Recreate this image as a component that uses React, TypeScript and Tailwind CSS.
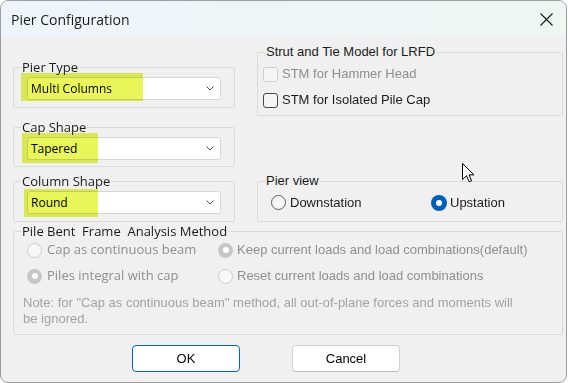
import React from "react";

const seg = "font-['Open_Sans',sans-serif]";
const ari = "font-['Liberation_Sans',Arial,sans-serif]";

type BoxProps = {
  label: string;
  font: string;
  className?: string;
  children?: React.ReactNode;
};

const GroupBox = ({ label, font, className = "", children }: BoxProps) => (
  <div className={`relative border border-[#dadada] rounded-[2px] ${className}`}>
    <span
      className={`absolute -top-[9px] left-[7px] px-[1px] bg-[#f0f0f0] leading-[16px] text-[13px] text-[#1b1b1b] whitespace-pre ${font}`}
    >
      {label}
    </span>
    {children}
  </div>
);

const Combo = ({ value }: { value: string }) => (
  <div className="flex items-center justify-between w-[194px] h-[23px] bg-white border border-[#d6d6d6] rounded-[3px] pl-[3px] pr-[6px]">
    <span className={`${seg} text-[12px] text-black leading-none`}>{value}</span>
    <svg width="8" height="5" viewBox="0 0 8 5">
      <path d="M0.5 0.5 L4 4 L7.5 0.5" fill="none" stroke="#505050" strokeWidth="1" />
    </svg>
  </div>
);

const Highlight = ({ className }: { className: string }) => (
  <div className={`absolute bg-[#e8f65a] mix-blend-multiply pointer-events-none ${className}`} />
);

const Radio = ({ checked, disabled }: { checked?: boolean; disabled?: boolean }) => {
  if (checked && !disabled)
    return (
      <span className="flex items-center justify-center w-[16px] h-[16px] rounded-full bg-[#005fb8]">
        <span className="w-[6px] h-[6px] rounded-full bg-white" />
      </span>
    );
  if (checked)
    return (
      <span className="flex items-center justify-center w-[15px] h-[15px] rounded-full bg-[#c6c6c6]">
        <span className="w-[6px] h-[6px] rounded-full bg-white" />
      </span>
    );
  return (
    <span
      className={`w-[15px] h-[15px] rounded-full border ${
        disabled ? "border-[#cbcbcb] bg-[#f8f8f8]" : "border-[#5f5f5f] bg-[#f6f6f6]"
      }`}
    />
  );
};

const Check = ({ disabled }: { disabled?: boolean }) => (
  <span
    className={`w-[15px] h-[15px] rounded-[3px] border ${
      disabled ? "border-[#cfcfcf] bg-[#f5f5f5]" : "border-[#474747] bg-[#f5f5f5]"
    }`}
  />
);

const Cursor = () => (
  <svg className="absolute left-[462px] top-[163px]" width="13" height="20" viewBox="0 0 13 20">
    <path
      d="M0.5 0.5 L0.5 16.5 L4.5 12.8 L7.2 18.8 L9.6 17.8 L7 11.9 L12 11.9 Z"
      fill="white"
      stroke="black"
      strokeWidth="1"
      strokeLinejoin="round"
    />
  </svg>
);

export default function App() {
  return (
    <div className="relative w-[568px] h-[383px] bg-white">
      <div className="w-[567px] h-[383px] rounded-[8px] border border-[#9d9d9d] overflow-hidden bg-[#f0f0f0] flex flex-col">
        {/* title bar */}
        <div className="h-[36px] shrink-0 flex items-center justify-between pl-[10px] pr-[13px] bg-gradient-to-r from-[#eef4fa] to-[#eff5f1]">
          <span className={`${seg} text-[14px] text-[#1a1a1a]`}>Pier Configuration</span>
          <svg width="13" height="13" viewBox="0 0 13 13">
            <path d="M0.5 0.5 L12.5 12.5 M12.5 0.5 L0.5 12.5" stroke="#1a1a1a" strokeWidth="1.1" />
          </svg>
        </div>

        <div className="pl-[12px] pr-[3px] flex flex-col">
          <div className="flex items-start">
            {/* left column */}
            <div className="w-[222px] shrink-0 flex flex-col">
              <GroupBox label="Pier Type" font={seg} className="mt-[30px] h-[41px] pl-[13px] pt-[9px]">
                <Combo value="Multi Columns" />
                <Highlight className="left-[7px] top-[5px] w-[122px] h-[28px]" />
              </GroupBox>
              <GroupBox label="Cap Shape" font={seg} className="mt-[19px] h-[40px] pl-[13px] pt-[9px]">
                <Combo value="Tapered" />
                <Highlight className="left-[8px] top-[5px] w-[76px] h-[30px]" />
              </GroupBox>
              <GroupBox label="Column Shape" font={seg} className="mt-[14px] h-[41px] pl-[13px] pt-[9px]">
                <Combo value="Round" />
                <Highlight className="left-[10px] top-[7px] w-[74px] h-[28px]" />
              </GroupBox>
            </div>

            {/* right column */}
            <div className="ml-[22px] flex-1 flex flex-col">
              <GroupBox
                label="Strut and Tie Model for LRFD"
                font={ari}
                className="mt-[15px] h-[64px] pl-[5px] pt-[8px]"
              >
                <div className="h-[26px] flex items-center gap-[4px]">
                  <Check disabled />
                  <span className={`${ari} text-[13px] text-[#8d8d8d]`}>STM for Hammer Head</span>
                </div>
                <div className="h-[26px] flex items-center gap-[4px]">
                  <Check />
                  <span className={`${ari} text-[13px] text-[#1b1b1b]`}>STM for Isolated Pile Cap</span>
                </div>
              </GroupBox>
              <GroupBox label="Pier view" font={ari} className="mt-[65px] h-[41px] pl-[13px] pt-[11px]">
                <div className="flex items-center">
                  <div className="w-[160px] flex items-center gap-[4px]">
                    <Radio />
                    <span className={`${ari} text-[13px] text-[#1b1b1b]`}>Downstation</span>
                  </div>
                  <div className="flex items-center gap-[3px]">
                    <Radio checked />
                    <span className={`${ari} text-[13px] text-[#1b1b1b]`}>Upstation</span>
                  </div>
                </div>
              </GroupBox>
            </div>
          </div>

          <GroupBox
            label="Pile Bent  Frame  Analysis Method"
            font={seg}
            className="mt-[9px] h-[104px] pl-[13px] pt-[5px]"
          >
            <div className="h-[26px] flex items-center">
              <div className="w-[191px] flex items-center gap-[5px]">
                <Radio disabled />
                <span className={`${seg} text-[13px] text-[#8f8f8f]`}>Cap as continuous beam</span>
              </div>
              <div className="flex items-center gap-[4px]">
                <Radio checked disabled />
                <span className={`${ari} text-[13px] text-[#8f8f8f]`}>
                  Keep current loads and load combinations(default)
                </span>
              </div>
            </div>
            <div className="h-[26px] flex items-center">
              <div className="w-[191px] flex items-center gap-[5px]">
                <Radio checked disabled />
                <span className={`${seg} text-[13px] text-[#8f8f8f]`}>Piles integral with cap</span>
              </div>
              <div className="flex items-center gap-[4px]">
                <Radio disabled />
                <span className={`${ari} text-[13px] text-[#8f8f8f]`}>
                  Reset current loads and load combinations
                </span>
              </div>
            </div>
            <p className={`${ari} mt-[6px] -ml-[4px] text-[13px] leading-[16px] text-[#a3a3a3] w-[502px]`}>
              Note: for "Cap as continuous beam" method, all out-of-plane forces and moments will
              be ignored.
            </p>
          </GroupBox>

          <div className="mt-[10px] ml-[119px] flex gap-[52px]">
            <button
              className={`${ari} w-[108px] h-[27px] rounded-[4px] bg-white border border-[#0067c0] text-[13px] text-black`}
            >
              OK
            </button>
            <button
              className={`${ari} w-[108px] h-[27px] rounded-[4px] bg-white border border-[#d2d2d2] border-b-[#bcbcbc] text-[13px] text-black`}
            >
              Cancel
            </button>
          </div>
        </div>
      </div>
      <Cursor />
    </div>
  );
}
